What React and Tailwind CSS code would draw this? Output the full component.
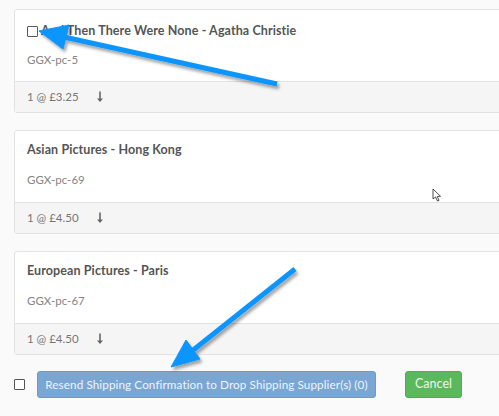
import React from "react";

const items = [
  { title: "And Then There Were None - Agatha Christie", code: "GGX-pc-5", price: "£3.25", check: true },
  { title: "Asian Pictures - Hong Kong", code: "GGX-pc-69", price: "£4.50" },
  { title: "European Pictures - Paris", code: "GGX-pc-67", price: "£4.50" },
];

function DownArrow() {
  return (
    <svg width="8" height="12" viewBox="0 0 8 12" className="text-[#666]">
      <path d="M4 0.5 V10" stroke="currentColor" strokeWidth="1.6" />
      <path d="M1 7.5 L4 11 L7 7.5 Z" fill="currentColor" />
    </svg>
  );
}

function ItemCard({ item }) {
  return (
    <div className="bg-white border border-[#e2e2e2] rounded-[3px] w-[500px] h-[104px] flex flex-col overflow-hidden">
      <div className={"flex-1 px-[12px] " + (item.check ? "pt-[14px]" : "pt-[12px]")}>
        <div className="flex items-center gap-[3px] h-[14px]">
          {item.check && (
            <span className="w-[11px] h-[11px] border border-[#5a5a5a] rounded-[1px] bg-white shrink-0" />
          )}
          <span className="text-[12.5px] font-bold text-[#555] leading-[14px] tracking-[0.1px]">{item.title}</span>
        </div>
        <div className={"text-[11.5px] text-[#858585] leading-[14px] " + (item.check ? "mt-[15px]" : "mt-[16px]")}>{item.code}</div>
      </div>
      <div className="h-[31px] bg-[#f5f5f5] border-t border-[#e2e2e2] px-[12px] flex items-center gap-[17px]">
        <span className="text-[11.5px] text-[#777] leading-[14px]">1 @ {item.price}</span>
        <DownArrow />
      </div>
    </div>
  );
}

export default function App() {
  return (
    <div
      className="relative w-[499px] h-[416px] bg-[#fafafa] overflow-hidden"
      style={{ fontFamily: 'Lato, "Liberation Sans", sans-serif' }}
    >
      <div className="pl-[14px] pt-[9px] flex flex-col gap-[17px]">
        {items.map((item) => (
          <ItemCard key={item.code} item={item} />
        ))}
      </div>
      <div className="flex items-center pl-[14px] mt-[16px] h-[27px]">
        <span className="w-[11px] h-[11px] border-[1.5px] border-[#555] rounded-[1px] bg-white" />
        <button className="ml-[12px] w-[339px] h-[27px] px-0 flex items-center justify-center rounded-[3px] bg-[#79a6d2] border border-[#6d9bc8] text-[#eef4fa] text-[11.7px] whitespace-nowrap tracking-[0.1px]">
          Resend Shipping Confirmation to Drop Shipping Supplier(s) (0)
        </button>
        <button className="ml-[29px] w-[57px] h-[27px] flex items-center justify-center rounded-[3px] bg-[#5cb85c] border border-[#4cae4c] text-[#eaf6ea] text-[12.5px]">
          Cancel
        </button>
      </div>

      <svg className="absolute left-0 top-0 pointer-events-none" width="499" height="416">
        <defs>
          <filter id="sh" x="-20%" y="-20%" width="140%" height="140%">
            <feDropShadow dx="2" dy="3" stdDeviation="1.5" floodColor="#000" floodOpacity="0.35" />
          </filter>
        </defs>
        <g filter="url(#sh)" fill="#0a95ff" stroke="#0a95ff">
          <line x1="277" y1="84" x2="64" y2="37" strokeWidth="5" />
          <polygon points="39,31 69,25 63,49" strokeWidth="1" />
          <line x1="295" y1="269" x2="192" y2="351" strokeWidth="5" />
          <polygon points="171,367 200,359 186,340" strokeWidth="1" />
        </g>
        <path d="M433 189 L433 199 L435.5 197 L437.5 201 L439 200.3 L437.2 196.5 L440.5 196.3 Z" fill="#fff" stroke="#222" strokeWidth="0.8" />
      </svg>
    </div>
  );
}
